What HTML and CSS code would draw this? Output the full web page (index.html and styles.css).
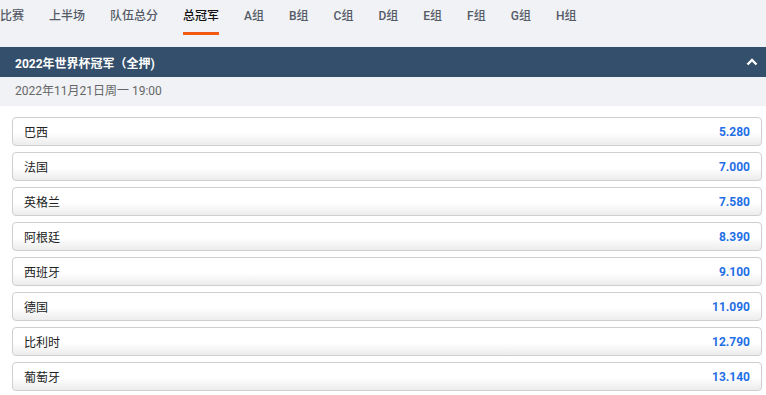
FILE: index.html
```html
<!DOCTYPE html>
<html lang="zh">
<head>
<meta charset="utf-8">
<link rel="stylesheet" href="styles.css">
</head>
<body>
<nav class="tabs">
  <span class="tab">比赛</span>
  <span class="tab">上半场</span>
  <span class="tab">队伍总分</span>
  <span class="tab active">总冠军</span>
  <span class="tab">A组</span>
  <span class="tab">B组</span>
  <span class="tab">C组</span>
  <span class="tab">D组</span>
  <span class="tab">E组</span>
  <span class="tab">F组</span>
  <span class="tab">G组</span>
  <span class="tab">H组</span>
</nav>
<div class="market-head">
  <span class="market-title">2022年世界杯冠军（全押)</span>
  <svg class="chev" width="12" height="8" viewBox="0 0 12 8"><path d="M1.5 6.5 L6 2 L10.5 6.5" fill="none" stroke="#fff" stroke-width="2.4"/></svg>
</div>
<div class="date-row">2022年11月21日周一 19:00</div>
<div class="list">
  <div class="row"><span class="name">巴西</span><span class="odds">5.280</span></div>
  <div class="row"><span class="name">法国</span><span class="odds">7.000</span></div>
  <div class="row"><span class="name">英格兰</span><span class="odds">7.580</span></div>
  <div class="row"><span class="name">阿根廷</span><span class="odds">8.390</span></div>
  <div class="row"><span class="name">西班牙</span><span class="odds">9.100</span></div>
  <div class="row"><span class="name">德国</span><span class="odds">11.090</span></div>
  <div class="row"><span class="name">比利时</span><span class="odds">12.790</span></div>
  <div class="row"><span class="name">葡萄牙</span><span class="odds">13.140</span></div>
</div>
</body>
</html>
```

FILE: styles.css
```css
* { box-sizing: border-box; }
html, body {
  margin: 0;
  padding: 0;
  background: #ffffff;
  font-family: Roboto, "Noto Sans CJK SC", "Noto Sans", sans-serif;
  font-size: 12px;
  overflow: hidden;
}
.tabs {
  display: flex;
  gap: 25px;
  height: 47px;
  background: #f0f2f6;
  padding-left: 0;
}
.tab {
  position: relative;
  line-height: 32px;
  font-size: 12px;
  font-weight: 500;
  color: #555b66;
  white-space: nowrap;
}
.tab.active {
  color: #111;
}
.tab.active::after {
  content: "";
  position: absolute;
  left: 0;
  right: 0;
  top: 32px;
  height: 3px;
  background: #f25a0f;
}
.market-head {
  display: flex;
  align-items: center;
  justify-content: space-between;
  height: 30px;
  background: #344f6b;
  padding: 0 8px 0 15px;
}
.market-title {
  color: #fff;
  font-weight: 700;
  font-size: 12px;
}
.chev { display: block; }
.date-row {
  height: 29px;
  line-height: 28px;
  background: #f0f2f6;
  color: #666;
  padding-left: 15px;
  font-size: 12px;
}
.list {
  display: flex;
  flex-direction: column;
  gap: 6px;
  padding: 11px 4px 0 12px;
}
.row {
  display: flex;
  justify-content: space-between;
  align-items: center;
  height: 29px;
  border: 1px solid #cfcfcf;
  border-radius: 4px;
  background: linear-gradient(to bottom, #ffffff 0%, #ffffff 55%, #ececec 100%);
  padding: 0 11px 0 11px;
}
.name {
  color: #222;
  font-size: 12px;
}
.odds {
  color: #1f6fe5;
  font-weight: 700;
  font-size: 12px;
}
```
